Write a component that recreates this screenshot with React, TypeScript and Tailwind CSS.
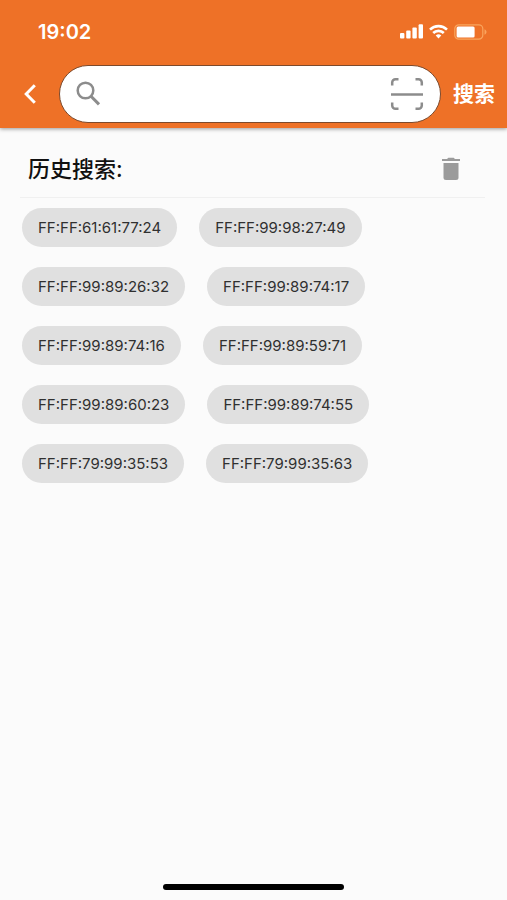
import { useState } from "react";

const initialHistory = [
  "FF:FF:61:61:77:24",
  "FF:FF:99:98:27:49",
  "FF:FF:99:89:26:32",
  "FF:FF:99:89:74:17",
  "FF:FF:99:89:74:16",
  "FF:FF:99:89:59:71",
  "FF:FF:99:89:60:23",
  "FF:FF:99:89:74:55",
  "FF:FF:79:99:35:53",
  "FF:FF:79:99:35:63",
];

function StatusBar() {
  return (
    <div className="flex h-[65px] items-center justify-between pb-0.5 pl-[38px] pr-5 text-white">
      <span className="text-[20px] leading-6 font-semibold">19:02</span>
      <div className="flex items-center gap-[6px]">
        {/* Signal */}
        <svg width="23" height="15" viewBox="0 0 23 15" fill="currentColor">
          <rect x="0" y="9" width="4.4" height="5.5" rx="1" />
          <rect x="6.2" y="6.5" width="4.4" height="8" rx="1" />
          <rect x="12.4" y="3.5" width="4.4" height="11" rx="1" />
          <rect x="18.6" y="0.3" width="4.4" height="14.2" rx="1" />
        </svg>
        {/* Wifi */}
        <svg width="19" height="15" viewBox="0 0 19 15" fill="none" stroke="currentColor" strokeWidth="2.6">
          <path d="M1 5.6a12.2 12.2 0 0 1 17 0" />
          <path d="M4.2 9a7.6 7.6 0 0 1 10.6 0" />
          <path d="M9.5 14.4 6.7 11.5a4 4 0 0 1 5.6 0z" fill="currentColor" stroke="none" />
        </svg>
        {/* Battery */}
        <svg width="33" height="16" viewBox="0 0 33 16" fill="none">
          <rect x="0.8" y="0.8" width="28" height="14.4" rx="4" stroke="#f9a55e" strokeWidth="1.2" />
          <rect x="2.6" y="2.6" width="18" height="10.8" rx="1.5" fill="white" />
          <path d="M30.5 5.2c1.3.6 2 1.6 2 2.8s-.7 2.2-2 2.8z" fill="#f9a55e" />
        </svg>
      </div>
    </div>
  );
}

export default function App() {
  const [query, setQuery] = useState("");
  const [history, setHistory] = useState(initialHistory);

  return (
    <div className="flex min-h-screen flex-col bg-[#fbfbfb] font-['Inter','Noto_Sans_CJK_SC',sans-serif]">
      {/* Header */}
      <header className="bg-[#ee7127] pb-[5px] shadow-[0_1px_4px_rgba(0,0,0,0.4)]">
        <StatusBar />
        <form className="flex items-center" onSubmit={(e) => e.preventDefault()}>
          <button type="button" aria-label="返回" className="flex w-[59px] justify-center text-white">
            <svg width="12" height="20" viewBox="0 0 12 20" fill="none" stroke="currentColor" strokeWidth="3">
              <path d="M10.8 1.2 2.2 10l8.6 8.8" />
            </svg>
          </button>

          <div className="flex h-[58px] min-w-0 flex-1 items-center rounded-full border border-[#7c4a2c] bg-white pr-4 pl-[15px] text-[#8c8c8c]">
            <svg className="shrink-0" width="26" height="26" viewBox="0 0 26 26" fill="none" stroke="currentColor" strokeWidth="2.5">
              <circle cx="10.5" cy="9.5" r="7.8" />
              <path d="m16 15.2 8 8.2" strokeWidth="3" />
            </svg>
            <input
              type="text"
              aria-label="搜索"
              value={query}
              onChange={(e) => setQuery(e.target.value)}
              className="h-full min-w-0 flex-1 bg-transparent px-3 text-base text-[#222] outline-none"
            />
            <button type="button" aria-label="扫描" className="shrink-0">
              <svg className="block" width="34" height="34" viewBox="0 0 34 34" fill="none" stroke="currentColor" strokeWidth="2.5">
                <path d="M2.2 8.5V5.5a3.3 3.3 0 0 1 3.3-3.3h3" />
                <path d="M25.5 2.2h3a3.3 3.3 0 0 1 3.3 3.3v3" />
                <path d="M31.8 25.5v3a3.3 3.3 0 0 1-3.3 3.3h-3" />
                <path d="M8.5 31.8h-3a3.3 3.3 0 0 1-3.3-3.3v-3" />
                <path d="M1 17.5h32" />
              </svg>
            </button>
          </div>

          <button type="submit" className="w-[66px] text-[21px] leading-8 font-bold text-white">
            搜索
          </button>
        </form>
      </header>

      {/* Search history */}
      <main className="flex-1 px-[22px] pt-3">
        <div className="-ml-0.5 flex h-[58px] items-center justify-between border-b border-[#f0f0f0] pr-6 pl-2">
          <h1 className="text-[22px] leading-8 font-medium text-[#111]">历史搜索:</h1>
          <button type="button" aria-label="清空" onClick={() => setHistory([])} className="text-[#9b9b9b]">
            <svg className="block" width="20" height="24" viewBox="0 0 20 24" fill="currentColor">
              <path d="M1 2h5l1.3-1.2h5.4L14 2h5v2H1z" />
              <path d="M2.5 6h15v14.5a2.5 2.5 0 0 1-2.5 2.5H5a2.5 2.5 0 0 1-2.5-2.5z" />
            </svg>
          </button>
        </div>

        <ul className="flex flex-wrap gap-x-[22px] gap-y-5 pt-[10px]">
          {history.map((item) => (
            <li key={item}>
              <button
                type="button"
                onClick={() => setQuery(item)}
                className="block h-[39px] rounded-full bg-[#e0e0e0] px-4 text-[15px] leading-5 text-[#303030]"
              >
                {item}
              </button>
            </li>
          ))}
        </ul>
      </main>

      {/* Home indicator */}
      <footer className="flex justify-center pb-[10px]">
        <div className="h-[6px] w-[181px] rounded-full bg-black" />
      </footer>
    </div>
  );
}
